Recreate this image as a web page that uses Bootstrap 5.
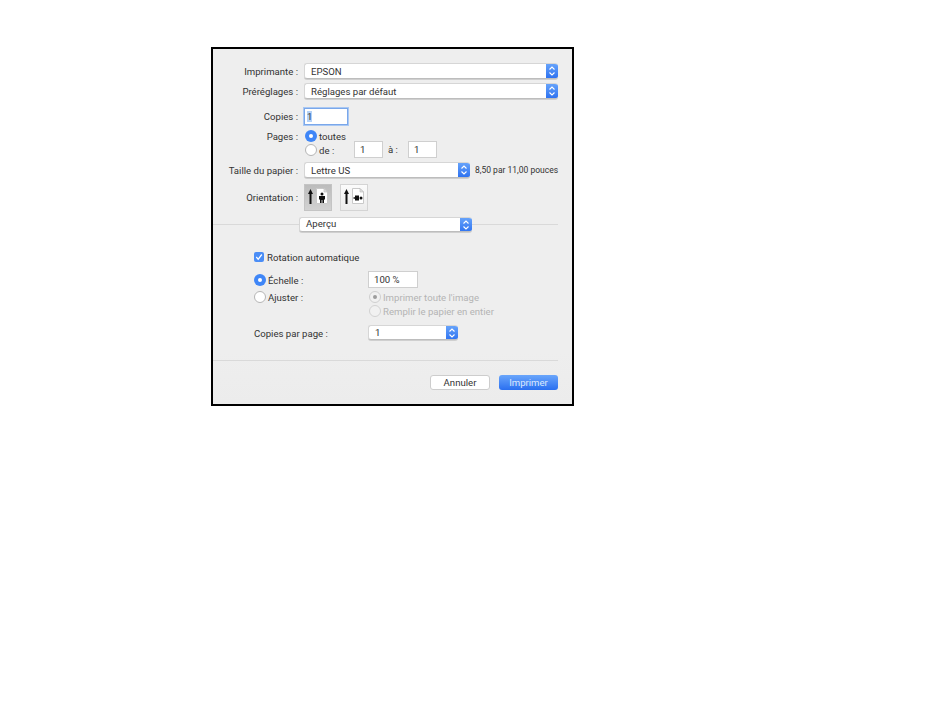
<!DOCTYPE html>
<html lang="fr">
<head>
    <meta charset="UTF-8">
    <title>Imprimer</title>
    <link rel="stylesheet" href="https://cdn.jsdelivr.net/npm/bootstrap@5.3.0/dist/css/bootstrap.min.css">
    <style>
        body { background: #fff; font-family: Roboto, "Liberation Sans", Arial, sans-serif; font-size: 9.6px; color: #333; }
        .pd-dialog { width: 363px; height: 359px; margin: 47px 0 0 211px; border: 2px solid #000; background: linear-gradient(#eeeeee, #eeeeee 85%, #ececec); overflow: hidden; }
        .pd-row { display: flex; align-items: center; line-height: 14px; }
        .pd-label { width: 85px; flex: none; margin-right: 6px; text-align: right; white-space: nowrap; }
        /* text sits 1px below the centre line in the mac dialog */
        .pd-down { line-height: 12px; padding-top: 2px; }
        .pd-popup { display: flex; height: 16px; background: #fff; border: 1px solid #d6d6d6; border-bottom-color: #bdbdbd; border-right: 0; border-radius: 3px; padding-left: 6px; align-items: center; overflow: hidden; box-shadow: 0 1px 0 #cfcfcf; }
        .pd-popup.pd-short { height: 15px; }
        .pd-popup .pd-txt { flex: 1; }
        .pd-step { width: 12px; height: 16px; flex: none; background: linear-gradient(#6aa6fb, #2a6ff0); display: flex; align-items: center; justify-content: center; }
        .pd-field { height: 17px; background: #fff; border: 1px solid #cfcfcf; padding: 0 0 0 5px; line-height: 15px; }
        .pd-focus { border: 1px solid #7aa7ea; box-shadow: 0 0 0 1px #a9c8f3; background: #fff; }
        .pd-focus span { background: #b5d2f7; }
        .pd-radio { width: 12px; height: 12px; flex: none; border-radius: 50%; background: #fff; border: 1px solid #b5b5b5; margin-right: 2px; }
        .pd-radio.on { background: #3f86f7; border: 0; position: relative; }
        .pd-radio.on::after { content: ""; position: absolute; left: 4px; top: 4px; width: 4px; height: 4px; border-radius: 50%; background: #fff; }
        .pd-radio.off-sel { background: #f1f1f1; border-color: #cfcfcf; position: relative; }
        .pd-radio.off-sel::after { content: ""; position: absolute; left: 3px; top: 3px; width: 4px; height: 4px; border-radius: 50%; background: #9d9d9d; }
        .pd-radio.dis { background: #f1f1f1; border-color: #d2d2d2; }
        .pd-shift { margin-left: 1px; }
        .pd-muted { color: #b4b4b4; }
        .pd-check { width: 10px; height: 10px; flex: none; background: #4a8df6; border-radius: 2px; margin-right: 3px; display: flex; }
        .pd-orient { width: 28px; height: 27px; padding-bottom: 3px; gap: 3px; border: 1px solid #d4d4d4; background: linear-gradient(#fbfbfb, #ececec); display: flex; align-items: center; justify-content: center; }
        .pd-orient.sel { background: linear-gradient(#bcbcbc, #d2d2d2); border-color: #c4c4c4; }
        .pd-rule { height: 1px; background: #d9d9d9; }
        .pd-btn { height: 15px; width: 60px; font-size: 9.6px; line-height: 13px; padding: 0; border-radius: 3px; }
        .pd-btn-cancel { background: #fff; border: 1px solid #cdcdcd; color: #333; }
        .pd-btn-ok { width: 59px; background: linear-gradient(#6aa6fb, #2a6ff0); border: 0; color: #dbe8fd; line-height: 15px; }
        .pd-size { font-size: 8.5px; margin-left: 5px; white-space: nowrap; }
    </style>
</head>
<body class="m-0">
    <svg width="0" height="0" class="d-block position-absolute">
        <symbol id="stepper" viewBox="0 0 12 16"><path d="M3.500 6.500 6 4l2.500 2.500M3.500 9.500 6 12l2.500-2.500" fill="none" stroke="#fff" stroke-width="1.100"/></symbol>
        <symbol id="up-arrow" viewBox="0 0 5 15"><path d="M2.500 0 5 5H3.500v10h-2V5H0z" fill="#111"/></symbol>
        <symbol id="sheet" viewBox="0 0 12 16"><path d="M.5.500h7.500l3.500 3.500v11.500H.5z" fill="#fff" stroke="#c9c9c9"/><path d="M8 .5v3.500h3.500z" fill="#e2e2e2" stroke="#bbb" stroke-width=".6"/></symbol>
    </svg>

    <div class="pd-dialog">
        <div class="pd-row" style="margin-top:14px">
            <div class="pd-label pd-down">Imprimante :</div>
            <div class="pd-popup" style="width:254px"><span class="pd-txt pd-down">EPSON</span><span class="pd-step"><svg width="12" height="16"><use href="#stepper"/></svg></span></div>
        </div>
        <div class="pd-row" style="margin-top:4px">
            <div class="pd-label pd-down">Préréglages :</div>
            <div class="pd-popup" style="width:254px"><span class="pd-txt pd-down">Réglages par défaut</span><span class="pd-step"><svg width="12" height="16"><use href="#stepper"/></svg></span></div>
        </div>
        <div class="pd-row" style="margin-top:9px">
            <div class="pd-label">Copies :</div>
            <div class="pd-field pd-focus" style="width:44px;padding-left:2px"><span>1</span></div>
        </div>
        <div class="pd-row" style="margin-top:4px">
            <div class="pd-label pd-down">Pages :</div>
            <span class="pd-radio on pd-shift"></span><span class="pd-down">toutes</span>
        </div>
        <div class="pd-row" style="margin-top:-2px">
            <div class="pd-label"></div>
            <span class="pd-radio pd-shift"></span><span class="pd-down" style="width:35px">de :</span>
            <div class="pd-field" style="width:29px">1</div>
            <span style="margin-left:5px;width:20px">à :</span>
            <div class="pd-field" style="width:29px">1</div>
        </div>
        <div class="pd-row" style="margin-top:4px">
            <div class="pd-label pd-down">Taille du papier :</div>
            <div class="pd-popup" style="width:166px"><span class="pd-txt pd-down">Lettre US</span><span class="pd-step"><svg width="12" height="16"><use href="#stepper"/></svg></span></div>
            <span class="pd-size">8,50 par 11,00 pouces</span>
        </div>
        <div class="pd-row" style="margin-top:6px">
            <div class="pd-label">Orientation :</div>
            <div class="pd-orient sel"><svg width="5" height="15"><use href="#up-arrow"/></svg><svg width="12" height="16">
                <use href="#sheet"/><circle cx="6" cy="6" r="1.500" fill="#111"/><path d="M3 8h6v3.500H8V15H6.400v-3h-.8v3H4v-3.500H3z" fill="#111"/></svg></div>
            <div class="pd-orient" style="margin-left:8px"><svg width="5" height="15"><use href="#up-arrow"/></svg><svg width="12" height="16">
                <use href="#sheet"/><circle cx="9" cy="10" r="1.500" fill="#111"/><path d="M3 7.500h4v5H3v-1.500H1.500v-.7H3v-.6H1.500V9H3z" fill="#111"/></svg></div>
        </div>
        <div class="d-flex align-items-center" style="margin-top:6px;margin-right:14px">
            <div class="pd-rule flex-grow-1"></div>
            <div class="pd-popup pd-short" style="width:173px"><span class="pd-txt">Aperçu</span><span class="pd-step"><svg width="12" height="16"><use href="#stepper"/></svg></span></div>
            <div class="pd-rule flex-grow-1"></div>
        </div>
        <div class="pd-row" style="margin:18px 0 0 41px">
            <span class="pd-check"><svg width="10" height="10" viewBox="0 0 10 10"><path d="M2.300 5 4.200 7.300 7.800 2.500" fill="none" stroke="#fff" stroke-width="1.300"/></svg></span><span class="pd-down">Rotation automatique</span>
        </div>
        <div class="pd-row" style="margin:7px 0 0 41px">
            <span class="pd-radio on"></span><span class="pd-down" style="width:100px">Échelle :</span>
            <div class="pd-field" style="width:50px">100 %</div>
        </div>
        <div class="pd-row" style="margin:2px 0 0 41px">
            <span class="pd-radio"></span><span class="pd-down" style="width:101px">Ajuster :</span>
            <span class="pd-radio off-sel"></span><span class="pd-muted pd-down">Imprimer toute l'image</span>
        </div>
        <div class="pd-row pd-muted" style="margin:0 0 0 156px">
            <span class="pd-radio dis"></span><span class="pd-down">Remplir le papier en entier</span>
        </div>
        <div class="pd-row" style="margin:7px 0 0 41px">
            <span style="width:114px;line-height:12px;padding-top:3px">Copies par page :</span>
            <div class="pd-popup pd-short" style="width:90px"><span class="pd-txt">1</span><span class="pd-step"><svg width="12" height="16"><use href="#stepper"/></svg></span></div>
        </div>
        <div class="pd-rule" style="margin:20px 14px 0 0"></div>
        <div class="d-flex justify-content-end" style="margin:14px 14px 0 0;gap:9px">
            <button type="button" class="btn pd-btn pd-btn-cancel">Annuler</button>
            <button type="button" class="btn pd-btn pd-btn-ok">Imprimer</button>
        </div>
    </div>

    <script src="https://cdn.jsdelivr.net/npm/bootstrap@5.3.0/dist/js/bootstrap.bundle.min.js"></script>
</body>
</html>
